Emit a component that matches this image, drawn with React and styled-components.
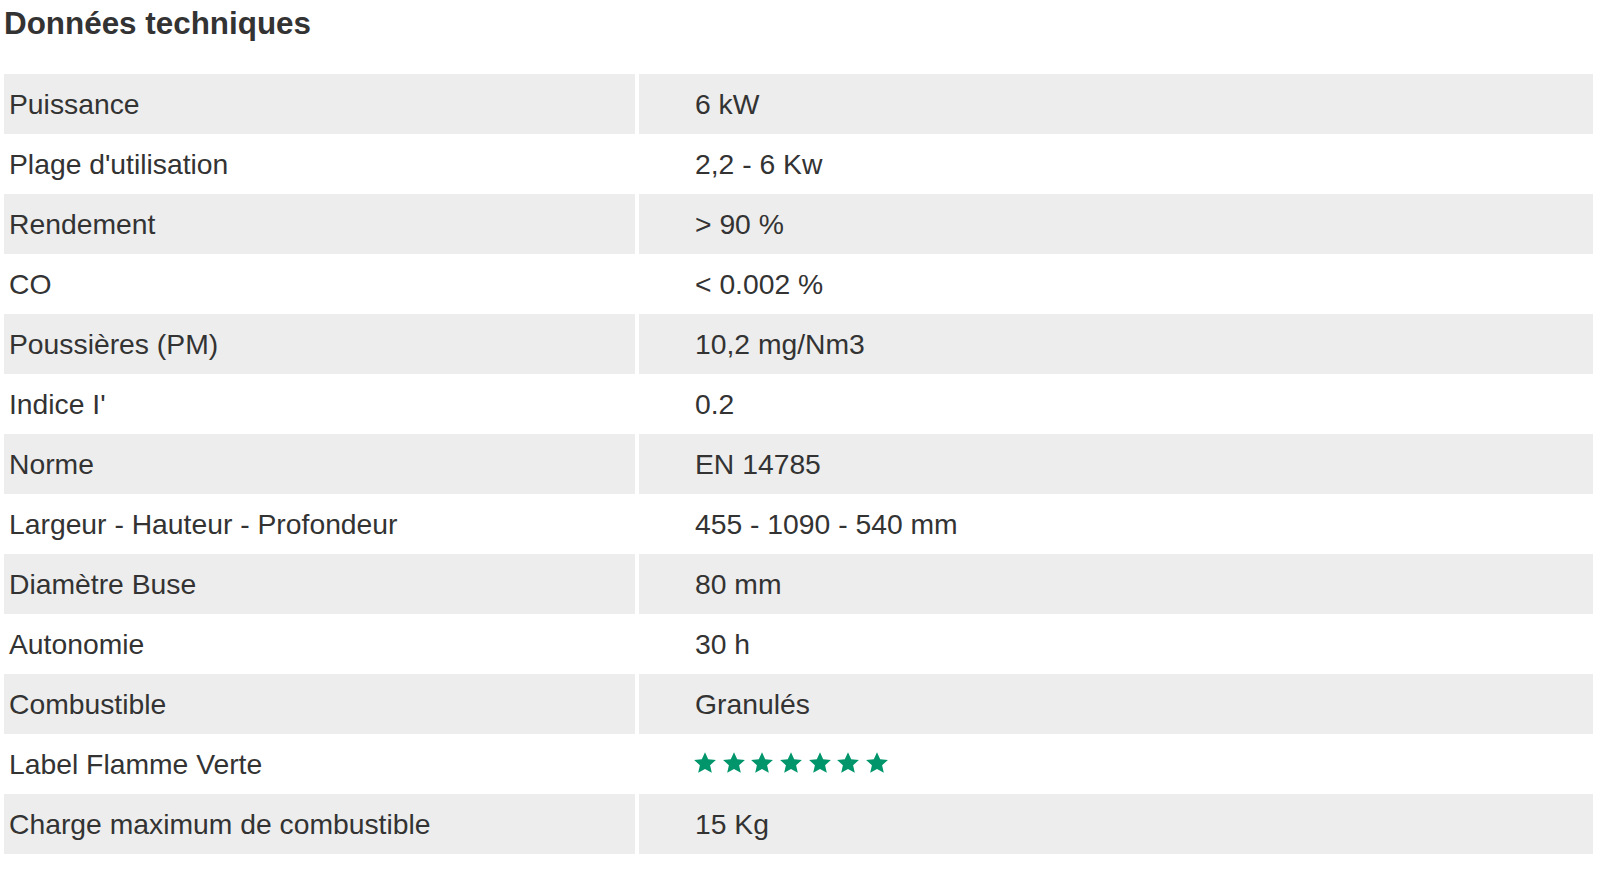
import React from "react";
import styled, { createGlobalStyle } from "styled-components";

const specs = [
  ["Puissance", "6 kW"],
  ["Plage d'utilisation", "2,2 - 6 Kw"],
  ["Rendement", "> 90 %"],
  ["CO", "< 0.002 %"],
  ["Poussières (PM)", "10,2 mg/Nm3"],
  ["Indice I'", "0.2"],
  ["Norme", "EN 14785"],
  ["Largeur - Hauteur - Profondeur", "455 - 1090 - 540 mm"],
  ["Diamètre Buse", "80 mm"],
  ["Autonomie", "30 h"],
  ["Combustible", "Granulés"],
  ["Label Flamme Verte", "stars"],
  ["Charge maximum de combustible", "15 Kg"],
];

const GlobalStyle = createGlobalStyle`
  body {
    margin: 0;
    background: #fff;
    font-family: "Liberation Sans", Arial, sans-serif;
    color: #333;
  }
`;

const Star = () => (
  <svg width="24" height="24" viewBox="0 0 24 24">
    <path
      d="M12 1.2l3.2 7 7.7.8-5.8 5.2 1.7 7.6L12 18l-6.8 3.8 1.7-7.6L1.1 9l7.7-.8z"
      fill="#00956a"
    />
  </svg>
);

const App = () => {
  return (
    <Page>
      <GlobalStyle />
      <Title>Données techniques</Title>
      <Table>
        <tbody>
          {specs.map(([label, value], i) => (
            <Row key={label} $striped={i % 2 === 0}>
              <Label>{label}</Label>
              <Value>
                {value === "stars" ? (
                  <Stars>
                    {Array.from({ length: 7 }).map((_, k) => (
                      <Star key={k} />
                    ))}
                  </Stars>
                ) : (
                  value
                )}
              </Value>
            </Row>
          ))}
        </tbody>
      </Table>
    </Page>
  );
};

const Page = styled.div`
  padding: 0 3px 0 0;
`;

const Title = styled.h2`
  margin: 0;
  padding: 6px 0 0 4px;
  height: 74px;
  box-sizing: border-box;
  font-size: 31.4px;
  line-height: 36px;
  font-weight: bold;
  color: #333;
`;

const Table = styled.table`
  width: 100%;
  border-collapse: separate;
  border-spacing: 4px 0;
  font-size: 28.3px;
`;

const Row = styled.tr`
  height: 60px;

  td {
    background: ${(p) => (p.$striped ? "#ededed" : "transparent")};
  }
`;

const Label = styled.td`
  width: 631px;
  padding: 0 0 0 5px;
  box-sizing: border-box;
  vertical-align: middle;
`;

const Value = styled.td`
  padding: 0 0 0 56px;
  vertical-align: middle;
`;

const Stars = styled.div`
  display: flex;
  gap: 4.7px;
  align-items: center;
  margin-left: -2px;
  padding-bottom: 2px;
`;

export default App;
